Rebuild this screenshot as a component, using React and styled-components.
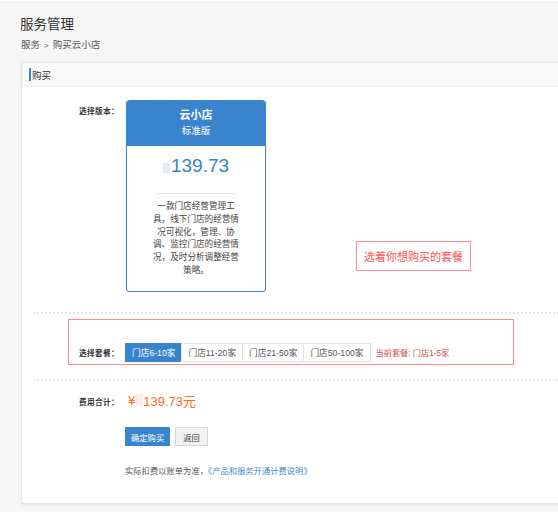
import React from "react";
import styled, {createGlobalStyle} from "styled-components";

const GlobalStyle = createGlobalStyle`
    html, body {
        margin: 0;
        padding: 0;
        background: #f6f6f6;
    }
    body {
        font-family: "Liberation Sans", "Noto Sans CJK SC", sans-serif;
        color: #333;
        border-top: 2px solid #fdfdfd;
    }
`;

const Page = styled.div`
    height: 510px;
    border-top: 1px solid #e9e9e9;
    padding-left: 21px;
    overflow: hidden;
`;

const Title = styled.h1`
    margin: 12px 0 0 -1px;
    font-size: 13.5px;
    line-height: 20px;
    font-weight: normal;
    color: #333;
`;

const Breadcrumb = styled.div`
    margin-top: 3px;
    font-size: 9.5px;
    line-height: 13px;
    color: #555;

    span {
        margin: 0 4px;
        font-size: 8px;
    }
`;

const Panel = styled.div`
    margin-top: 10px;
    height: 440px;
    background: #fff;
    border: 1px solid #e6e6e6;
    border-right: none;
    box-shadow: 0 1px 2px rgba(0, 0, 0, 0.06);
`;

const PanelHeader = styled.div`
    height: 23px;
    display: flex;
    align-items: center;
    padding-left: 7px;
    background: #f9f9f9;
    border-bottom: 1px solid #f0f0f0;
    font-size: 9.5px;
    color: #333;

    &::before {
        content: "";
        width: 2px;
        height: 13px;
        background: #3a84cd;
        margin-right: 1px;
    }
`;

const Label = styled.div`
    width: ${p => p.$width || 103}px;
    flex-shrink: 0;
    box-sizing: border-box;
    padding-right: 6px;
    text-align: right;
    font-size: 7.7px;
    letter-spacing: 0.3px;
    font-weight: bold;
    color: #333;
`;

const VersionRow = styled.div`
    display: flex;
    align-items: flex-start;
    padding-top: 13px;

    ${Label} {
        padding-top: 5px;
    }
`;

const Card = styled.div`
    width: 138px;
    height: 190px;
    margin-left: 1px;
    border: 1px solid #3a84cd;
    border-radius: 3px;
    overflow: hidden;
    display: flex;
    flex-direction: column;
    align-items: center;
`;

const CardHead = styled.div`
    align-self: stretch;
    height: 45px;
    background: #3a84cd;
    color: #fff;
    text-align: center;
    padding-top: 6px;
    box-sizing: border-box;

    b {
        display: block;
        font-size: 11px;
        line-height: 16px;
    }

    small {
        display: block;
        font-size: 9.5px;
        line-height: 15px;
    }
`;

const Price = styled.div`
    display: flex;
    align-items: center;
    margin: 9px 0 0 4px;
    font-size: 19px;
    line-height: 22px;
    color: #3a80cf;

    &::before {
        content: "";
        width: 7px;
        height: 10px;
        margin: 3px 1px 0 -4px;
        background: #e7edf6;
    }
`;

const Divider = styled.div`
    width: 80px;
    height: 1px;
    background: #e6e6e6;
    margin-top: 16px;
`;

const Description = styled.p`
    width: 88px;
    margin: 6px 0 0;
    font-size: 8.6px;
    line-height: 12.8px;
    text-align: center;
    color: #444;
`;

const Note = styled.div`
    margin: 141px 0 0 90px;
    padding: 0 7px;
    height: 28px;
    display: flex;
    align-items: center;
    border: 1px solid #ff8c8c;
    font-size: 11px;
    color: #ff5252;
`;

const Dotted = styled.div`
    margin: ${p => p.$top}px 0 0 12px;
    border-top: 2px dotted #e8e8e8;
`;

const PackageBox = styled.div`
    display: flex;
    align-items: center;
    width: 446px;
    height: 46px;
    margin: 5px 0 0 46px;
    padding-top: 20px;
    box-sizing: border-box;
    border: 1px solid #ff8c8c;
`;

const Options = styled.div`
    display: flex;
    margin-left: 1px;
`;

const Option = styled.button`
    height: 19px;
    padding: 0 6px;
    margin-left: -1px;
    border: 1px solid ${p => (p.$active ? "#3a84cd" : "#e3e3e3")};
    background: ${p => (p.$active ? "#3a84cd" : "#fff")};
    color: ${p => (p.$active ? "#fff" : "#555")};
    font-family: inherit;
    font-size: 8.7px;
    cursor: pointer;
`;

const Current = styled.span`
    margin-left: 5px;
    font-size: 8.2px;
    color: #d04848;
`;

const FeeRow = styled.div`
    display: flex;
    align-items: center;
    margin-top: 9px;
    height: 20px;

    ${Label} {
        padding-top: 2px;
    }
`;

const Fee = styled.div`
    display: flex;
    align-items: center;
    margin-left: 3px;
    font-size: 13px;
    color: #ff6a1e;

    i {
        display: inline-block;
        width: 7px;
        height: 12px;
        margin: 0 0 0 1px;
        background: #fdeee6;
    }
`;

const Actions = styled.div`
    display: flex;
    gap: 5px;
    margin: 17px 0 0 103px;
`;

const Button = styled.button`
    height: 19px;
    padding: 0 ${p => (p.$primary ? 5 : 7)}px;
    border: 1px solid ${p => (p.$primary ? "#3a84cd" : "#d6d6d6")};
    background: ${p => (p.$primary ? "#3a84cd" : "#f2f2f2")};
    color: ${p => (p.$primary ? "#fff" : "#444")};
    font-family: inherit;
    font-size: 8.3px;
    cursor: pointer;
`;

const Footnote = styled.p`
    margin: 19px 0 0 103px;
    font-size: 8.3px;
    line-height: 12px;
    color: #555;

    a {
        color: #4a88cf;
        text-decoration: none;
    }
`;

const packages = [
    {name: "门店6-10家", active: true},
    {name: "门店11-20家"},
    {name: "门店21-50家"},
    {name: "门店50-100家"},
];

export default function App() {
    return (
        <>
            <GlobalStyle/>
            <Page>
                <Title>服务管理</Title>
                <Breadcrumb>服务<span>&gt;</span>购买云小店</Breadcrumb>
                <Panel>
                    <PanelHeader>购买</PanelHeader>
                    <VersionRow>
                        <Label>选择版本：</Label>
                        <Card>
                            <CardHead>
                                <b>云小店</b>
                                <small>标准版</small>
                            </CardHead>
                            <Price>139.73</Price>
                            <Divider/>
                            <Description>
                                一款门店经营管理工具，线下门店的经营情况可视化，管理、协调、监控门店的经营情况，及时分析调整经营策略。
                            </Description>
                        </Card>
                        <Note>选着你想购买的套餐</Note>
                    </VersionRow>
                    <Dotted $top={20}/>
                    <PackageBox>
                        <Label $width={56}>选择套餐：</Label>
                        <Options>
                            {packages.map(p => (
                                <Option key={p.name} $active={p.active}>{p.name}</Option>
                            ))}
                        </Options>
                        <Current>当前套餐: 门店1-5家</Current>
                    </PackageBox>
                    <Dotted $top={14}/>
                    <FeeRow>
                        <Label>费用合计：</Label>
                        <Fee>¥<i/>139.73元</Fee>
                    </FeeRow>
                    <Actions>
                        <Button $primary>确定购买</Button>
                        <Button>返回</Button>
                    </Actions>
                    <Footnote>
                        实际扣费以账单为准，<a href="#">《产品和服务开通计费说明》</a>
                    </Footnote>
                </Panel>
            </Page>
        </>
    );
}
